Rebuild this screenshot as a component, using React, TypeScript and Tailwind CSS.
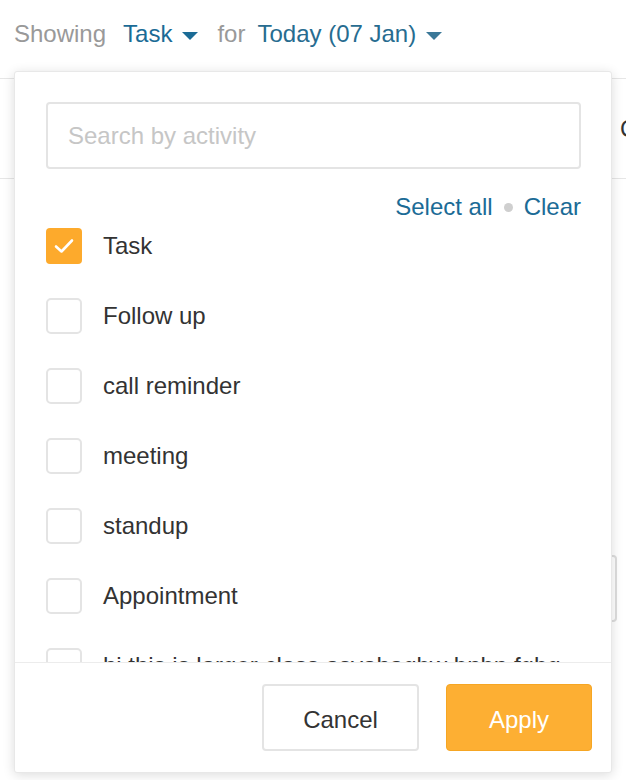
import { useState } from "react";

const ACTIVITIES = [
  "Task",
  "Follow up",
  "call reminder",
  "meeting",
  "standup",
  "Appointment",
  "hi this is larger class asvahagbw bnbn fgbg",
  "demo",
];

function Caret({ className }: { className?: string }) {
  return (
    <svg width="16" height="8" viewBox="0 0 16 8" className={className}>
      <path d="M0 0 L16 0 L8 8 Z" fill="currentColor" />
    </svg>
  );
}

function Checkbox({ checked }: { checked: boolean }) {
  if (checked) {
    return (
      <span className="flex h-[36px] w-[36px] shrink-0 items-center justify-center rounded-[4px] bg-[#fdaa2c]">
        <svg width="20" height="16" viewBox="0 0 20 16">
          <path d="M2 8.5 L7.5 13.5 L18 2.5" fill="none" stroke="white" strokeWidth="2.6" strokeLinecap="round" strokeLinejoin="round" />
        </svg>
      </span>
    );
  }
  return <span className="h-[36px] w-[36px] shrink-0 rounded-[5px] border-2 border-[#e4e4e4] bg-white" />;
}

export default function App() {
  const [selected] = useState<string[]>(["Task"]);

  return (
    <div className="relative h-[780px] w-[626px] overflow-hidden bg-white font-['Liberation_Sans',Arial,sans-serif] text-[24px]">
      {/* page behind the dropdown */}
      <div className="flex h-[79px] items-start border-b border-[#e6e6e6] pl-[14px] pt-[18px] leading-[32px]">
        <span className="text-[#999999]">Showing</span>
        <span className="ml-[17px] text-[#1b6b96]">Task</span>
        <Caret className="ml-[10px] mt-[14px] text-[#1b6b96]" />
        <span className="ml-[19px] text-[#999999]">for</span>
        <span className="ml-[12px] text-[#276c90]">Today (07 Jan)</span>
        <Caret className="ml-[10px] mt-[14px] text-[#3b7898]" />
      </div>
      <div className="h-[100px] whitespace-nowrap border-b border-[#e6e6e6] pl-[620px] pt-[34px] leading-[32px] text-[#333]">
        Calls
      </div>
      <div className="ml-auto mr-[9px] mt-[376px] h-[67px] w-[200px] rounded-[4px] border-2 border-[#dddddd]" />

      {/* dropdown */}
      <div className="absolute left-[14px] top-[71px] flex h-[702px] w-[598px] flex-col rounded-[3px] border border-[#e8e8e8] bg-white shadow-[0_2px_12px_rgba(0,0,0,0.14)]">
        <div className="px-[30px] pl-[31px] pt-[30px]">
          <input
            placeholder="Search by activity"
            className="h-[67px] w-full rounded-[4px] border-2 border-[#e4e4e4] px-[20px] text-[24px] text-[#333] outline-none placeholder:text-[#c6c6c6]"
          />
          <div className="mt-[22px] flex h-[32px] items-center justify-end leading-[32px] text-[#1b6b96]">
            <span>Select all</span>
            <span className="mx-[11px] h-[9px] w-[9px] rounded-full bg-[#cfcfcf]" />
            <span>Clear</span>
          </div>
        </div>
        <div className="mt-[5px] h-[434px] overflow-hidden pl-[31px]">
          <div className="flex flex-col gap-[34px]">
            {ACTIVITIES.map((a) => (
              <div key={a} className="flex h-[36px] items-center">
                <Checkbox checked={selected.includes(a)} />
                <span className="ml-[21px] whitespace-nowrap leading-[32px] text-[#333]">{a}</span>
              </div>
            ))}
          </div>
        </div>
        <div className="flex flex-1 items-center justify-end gap-[27px] border-t border-[#ececec] pr-[19px]">
          <button className="h-[67px] w-[157px] rounded-[4px] border-2 border-[#e4e4e4] bg-white pt-[4px] text-[24px] text-[#333]">
            Cancel
          </button>
          <button className="h-[67px] w-[146px] rounded-[4px] border border-[#f6a623] bg-[#fdaf33] pt-[4px] text-[24px] text-white">
            Apply
          </button>
        </div>
      </div>
    </div>
  );
}
